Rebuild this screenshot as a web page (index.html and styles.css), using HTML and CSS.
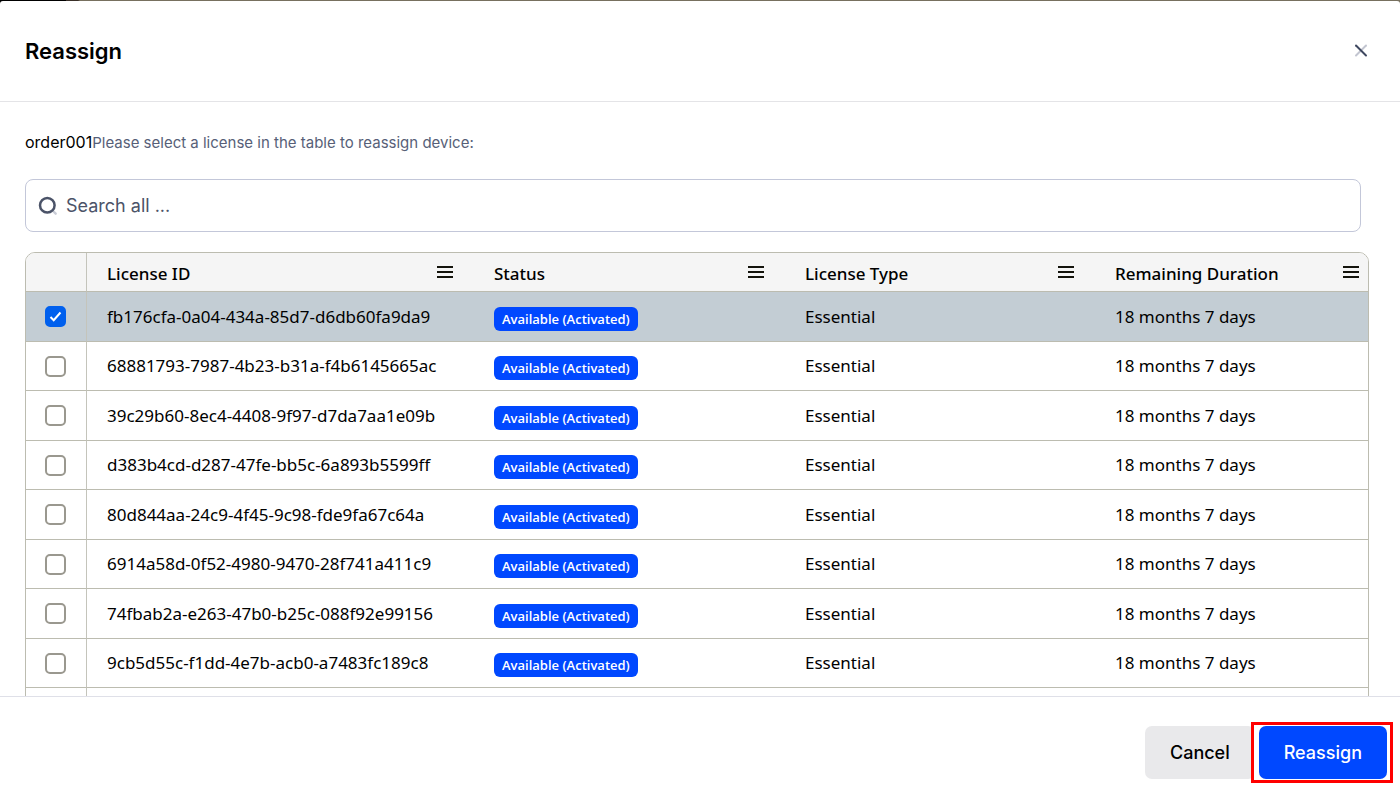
FILE: index.html
```html
<!DOCTYPE html>
<html lang="en">
<head>
<meta charset="utf-8">
<title>Reassign</title>
<link rel="stylesheet" href="styles.css">
</head>
<body>
<div class="dialog" role="dialog" aria-labelledby="dialog-title">
  <header class="dialog-header">
    <h1 class="dialog-title" id="dialog-title">Reassign</h1>
    <button class="close" type="button" aria-label="Close">
      <svg width="14" height="14" viewBox="0 0 14 14" fill="none" stroke-width="2" stroke-linecap="round"><path d="M12 1.5 2 11.5" stroke="#c2c5d0"/><path d="M2 1.5l10 10" stroke="#3f4860"/></svg>
    </button>
  </header>
  <main class="dialog-body">
    <p class="intro"><span class="order">order001</span>Please select a license in the table to reassign device:</p>
    <label class="search">
      <svg width="20" height="20" viewBox="0 0 20 20" fill="none"><path d="m15.5 15.5 2.2 2.2" stroke="#c9ccd6" stroke-width="2.4" stroke-linecap="round"/><circle cx="9.3" cy="9.3" r="7.3" stroke="#4b5368" stroke-width="2.5"/></svg>
      <input class="search-input" type="text" placeholder="Search all ..." aria-label="Search all">
    </label>
    <div class="grid">
      <table class="licenses">
        <colgroup><col class="c-check"><col class="c-id"><col class="c-status"><col class="c-type"><col></colgroup>
        <thead>
          <tr>
            <th></th>
            <th><div class="head">License ID<button class="menu" type="button" aria-label="License ID menu"></button></div></th>
            <th><div class="head">Status<button class="menu" type="button" aria-label="Status menu"></button></div></th>
            <th><div class="head">License Type<button class="menu" type="button" aria-label="License Type menu"></button></div></th>
            <th><div class="head">Remaining Duration<button class="menu" type="button" aria-label="Remaining Duration menu"></button></div></th>
          </tr>
        </thead>
        <tbody>
          <tr class="selected"><td><input class="check" type="checkbox" checked aria-label="Select license 1"></td><td>fb176cfa-0a04-434a-85d7-d6db60fa9da9</td><td><span class="badge">Available (Activated)</span></td><td>Essential</td><td>18 months 7 days</td></tr>
          <tr><td><input class="check" type="checkbox" aria-label="Select license 2"></td><td>68881793-7987-4b23-b31a-f4b6145665ac</td><td><span class="badge">Available (Activated)</span></td><td>Essential</td><td>18 months 7 days</td></tr>
          <tr><td><input class="check" type="checkbox" aria-label="Select license 3"></td><td>39c29b60-8ec4-4408-9f97-d7da7aa1e09b</td><td><span class="badge">Available (Activated)</span></td><td>Essential</td><td>18 months 7 days</td></tr>
          <tr><td><input class="check" type="checkbox" aria-label="Select license 4"></td><td>d383b4cd-d287-47fe-bb5c-6a893b5599ff</td><td><span class="badge">Available (Activated)</span></td><td>Essential</td><td>18 months 7 days</td></tr>
          <tr><td><input class="check" type="checkbox" aria-label="Select license 5"></td><td>80d844aa-24c9-4f45-9c98-fde9fa67c64a</td><td><span class="badge">Available (Activated)</span></td><td>Essential</td><td>18 months 7 days</td></tr>
          <tr><td><input class="check" type="checkbox" aria-label="Select license 6"></td><td>6914a58d-0f52-4980-9470-28f741a411c9</td><td><span class="badge">Available (Activated)</span></td><td>Essential</td><td>18 months 7 days</td></tr>
          <tr><td><input class="check" type="checkbox" aria-label="Select license 7"></td><td>74fbab2a-e263-47b0-b25c-088f92e99156</td><td><span class="badge">Available (Activated)</span></td><td>Essential</td><td>18 months 7 days</td></tr>
          <tr><td><input class="check" type="checkbox" aria-label="Select license 8"></td><td>9cb5d55c-f1dd-4e7b-acb0-a7483fc189c8</td><td><span class="badge">Available (Activated)</span></td><td>Essential</td><td>18 months 7 days</td></tr>
          <tr><td></td><td></td><td></td><td></td><td></td></tr>
        </tbody>
      </table>
    </div>
  </main>
  <footer class="dialog-footer">
    <button class="btn btn-cancel" type="button">Cancel</button>
    <div class="callout"><button class="btn btn-primary" type="button">Reassign</button></div>
  </footer>
</div>
</body>
</html>
```
FILE: styles.css
```css
* { box-sizing: border-box; }

body {
  margin: 0;
  padding-top: 1px;
  height: 100vh;
  background: linear-gradient(90deg, #000 66px, #3a3028 66px, #3a3028 78px, #77705f 80px);
  font-family: Inter, "Liberation Sans", sans-serif;
  color: #000;
}

button, input { font: inherit; color: inherit; margin: 0; }
button { border: 0; padding: 0; background: none; cursor: pointer; }

.dialog {
  height: 100%;
  display: flex;
  flex-direction: column;
  background: #fff;
  border-radius: 3px 3px 0 0;
}

.dialog-header {
  flex: none;
  height: 101px;
  padding: 0 32px 0 25px;
  display: flex;
  align-items: center;
  justify-content: space-between;
  border-bottom: 1px solid #e4e4e7;
}
.dialog-title { margin: 0; font-size: 22px; line-height: 28px; font-weight: 600; }
.close { display: flex; }

.dialog-body {
  flex: 1;
  min-height: 0;
  overflow: hidden;
  padding: 28px 31px 0 25px;
}
.intro { margin: 0 0 24px; font-size: 15px; line-height: 25px; color: #575f78; }
.order { font-size: 16px; color: #000; }

.search {
  display: flex;
  align-items: center;
  gap: 8px;
  height: 53px;
  margin: 0 8px 20px 0;
  padding: 0 12px;
  border: 1px solid #c3c7d9;
  border-radius: 8px;
}
.search-input {
  flex: 1;
  min-width: 0;
  padding: 0;
  border: 0;
  outline: 0;
  background: none;
  font-size: 18px;
  line-height: 24px;
}
.search-input::placeholder { color: #4b5368; opacity: 1; }

.grid {
  border: 1px solid #bcbcb0;
  border-radius: 10px 10px 0 0;
  overflow: hidden;
}
.licenses {
  width: 100%;
  table-layout: fixed;
  border-collapse: separate;
  border-spacing: 0;
  font-family: "Noto Sans", "Open Sans", sans-serif;
  font-size: 17px;
  line-height: 24px;
}
.c-check { width: 61px; }
.c-id { width: 387px; }
.c-status { width: 311px; }
.c-type { width: 310px; }

.licenses th, .licenses td {
  padding: 0 20px;
  border-bottom: 1px solid #bcbcb0;
  text-align: left;
  white-space: nowrap;
}
.licenses th:first-child, .licenses td:first-child {
  padding: 0 0 0 19px;
  border-right: 1px solid #c4c4bb;
}
.licenses th { padding-right: 21px; font-weight: 500; }
.licenses th:last-child { padding-right: 9px; }
.licenses thead tr { height: 39px; background: #f5f5f5; }
.licenses tbody tr { height: 50px; }
.licenses tbody tr:nth-child(even) { height: 49px; }
.licenses .selected { background: #c3cdd4; }

.head { display: flex; align-items: center; justify-content: space-between; padding-top: 3px; }
.menu {
  width: 16px;
  height: 12px;
  margin-bottom: 4px;
  background: linear-gradient(#14140c 2px, transparent 2px 5px, #14140c 5px 7px, transparent 7px 10px, #14140c 10px);
}

.check {
  appearance: none;
  display: block;
  width: 21px;
  height: 21px;
  border: 2px solid #9a988f;
  border-radius: 5px;
  background: #fff;
}
.check:checked {
  border-color: #0060ee;
  background: #0060ee url("data:image/svg+xml,%3Csvg xmlns='http://www.w3.org/2000/svg' viewBox='0 0 17 17' fill='none' stroke='white' stroke-width='2'%3E%3Cpath d='M3.5 9l3.2 3.2L13.5 4.5'/%3E%3C/svg%3E") center / 17px 17px;
}

.badge {
  display: block;
  width: max-content;
  margin-top: 4px;
  padding: 0 8px;
  border-radius: 6px;
  background: #0048ff;
  color: #fff;
  font-family: "Open Sans", "Noto Sans", sans-serif;
  font-size: 13px;
  line-height: 24px;
  font-weight: 600;
}

.dialog-footer {
  flex: none;
  height: 108px;
  padding: 4px 7px 0 25px;
  display: flex;
  align-items: center;
  justify-content: flex-end;
  border-top: 1px solid #dfe0e8;
}
.btn {
  height: 53px;
  padding: 0 25px;
  border-radius: 7px;
  font-size: 18px;
  line-height: 24px;
  font-weight: 500;
}
.btn-cancel { background: #e9e9eb; }
.btn-primary { display: block; background: #0048ff; color: #fff; }
.callout {
  margin-left: -4px;
  padding: 1px 3px 1px 5px;
  border: 3px solid #f00;
  background: #fff;
}
```
